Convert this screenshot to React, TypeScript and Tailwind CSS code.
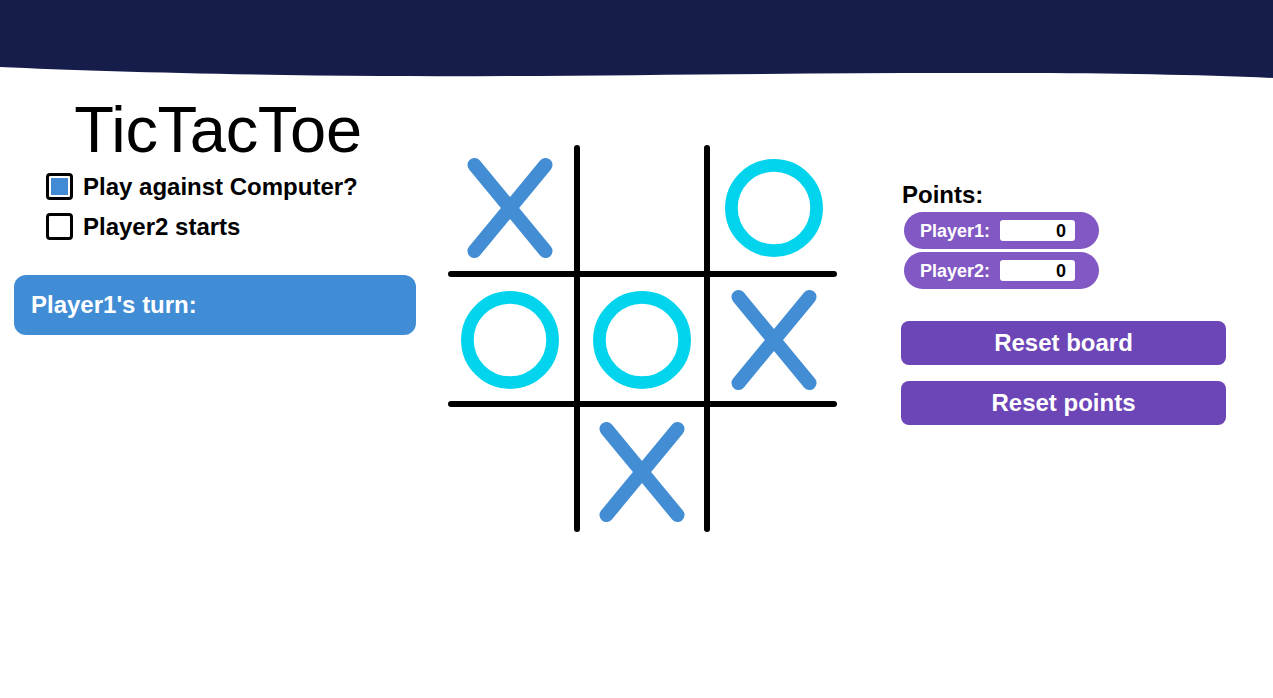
import React from "react";

type Mark = "X" | "O" | "";

const board: Mark[] = ["X", "", "O", "O", "O", "X", "", "X", ""];

function Cell({ mark }: { mark: Mark }) {
  return (
    <div className="w-[132px] h-[132px] flex items-center justify-center">
      {mark === "X" && (
        <svg width="100" height="100" viewBox="-50 -50 100 100">
          <g stroke="#428dd4" strokeWidth="14" strokeLinecap="round">
            <line x1="-35.5" y1="-43" x2="35.5" y2="43" />
            <line x1="35.5" y1="-43" x2="-35.5" y2="43" />
          </g>
        </svg>
      )}
      {mark === "O" && (
        <svg width="100" height="100" viewBox="-50 -50 100 100">
          <circle r="42.6" fill="none" stroke="#02d4ee" strokeWidth="12.7" />
        </svg>
      )}
    </div>
  );
}

function Checkbox({ checked, label }: { checked: boolean; label: string }) {
  return (
    <label className="flex items-center gap-[10px] h-[27px]">
      <span className="w-[27px] h-[27px] border-[3px] border-black rounded-[4px] p-[2px] bg-white">
        {checked && <span className="block w-full h-full bg-[#428bd4]" />}
      </span>
      <span className="text-[24px] font-bold leading-none text-black">{label}</span>
    </label>
  );
}

function ScorePill({ name, score }: { name: string; score: number }) {
  return (
    <div className="w-[195px] h-[37px] rounded-full bg-[#8259c4] flex items-center pl-[16px] gap-[10px]">
      <span className="text-[18px] font-bold text-white leading-none">{name}:</span>
      <div className="w-[75px] h-[21px] bg-white rounded-[3px] flex items-center justify-end pr-[9px] text-[18px] font-bold leading-none text-black">
        {score}
      </div>
    </div>
  );
}

export default function App() {
  return (
    <div className="min-h-screen bg-white font-['Liberation_Sans',Arial,sans-serif]">
      <header>
        <div className="h-[66px] bg-[#161d4b]" />
        <svg className="block w-full h-[13px]" viewBox="0 0 1273 13" preserveAspectRatio="none">
          <path
            d="M0 0 H1273 V12 C1180 8 1080 7 950 7 C750 7 550 11 380 10 C220 9 90 5 0 1 Z"
            fill="#161d4b"
          />
        </svg>
      </header>

      <main className="flex items-start">
        <section className="ml-[14px] w-[402px] mt-[18px] flex flex-col">
          <h1 className="pl-[6px] text-[65px] leading-none font-normal text-black text-center tracking-[-0.3px]">
            TicTacToe
          </h1>
          <div className="mt-[11px] ml-[32px] flex flex-col gap-[13px]">
            <Checkbox checked label="Play against Computer?" />
            <Checkbox checked={false} label="Player2 starts" />
          </div>
          <div className="mt-[35px] h-[60px] rounded-[12px] bg-[#418dd5] flex items-center pl-[17px]">
            <span className="text-white text-[24px] font-bold leading-none">Player1's turn:</span>
          </div>
        </section>

        <section className="ml-[28px] mt-[63px] relative w-[396px] h-[396px]">
          <svg className="absolute inset-0" width="396" height="396" viewBox="0 0 396 396">
            <g stroke="#000" strokeWidth="6" strokeLinecap="round">
              <line x1="133" y1="6" x2="133" y2="387" />
              <line x1="263" y1="6" x2="263" y2="387" />
              <line x1="7" y1="132" x2="390" y2="132" />
              <line x1="7" y1="262" x2="390" y2="262" />
            </g>
          </svg>
          <div className="relative grid grid-cols-3">
            {board.map((m, i) => (
              <Cell key={i} mark={m} />
            ))}
          </div>
        </section>

        <section className="ml-[61px] mt-[104px] w-[325px] flex flex-col">
          <h2 className="ml-[1px] text-[24px] font-bold leading-none text-black">Points:</h2>
          <div className="mt-[5px] ml-[3px] flex flex-col gap-[3px]">
            <ScorePill name="Player1" score={0} />
            <ScorePill name="Player2" score={0} />
          </div>
          <button className="mt-[32px] h-[44px] rounded-[8px] bg-[#6c45b6] text-white text-[24px] font-bold">
            Reset board
          </button>
          <button className="mt-[16px] h-[44px] rounded-[8px] bg-[#6c45b6] text-white text-[24px] font-bold">
            Reset points
          </button>
        </section>
      </main>
    </div>
  );
}
